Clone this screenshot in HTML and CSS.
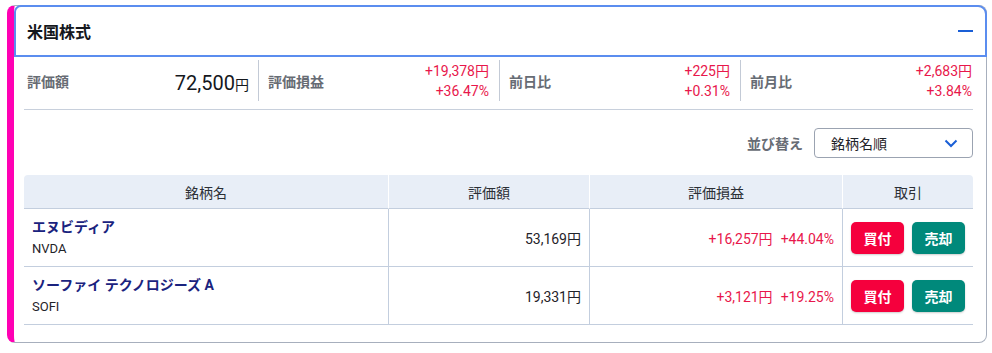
FILE: index.html
```html
<!DOCTYPE html>
<html lang="ja">
<head>
  <meta charset="UTF-8">
  <meta name="viewport" content="width=device-width, initial-scale=1.0">
  <title>米国株式</title>
  <link rel="stylesheet" href="styles.css">
</head>
<body>
  <div class="card">
    <div class="card-header">
      <h2>米国株式</h2>
      <button class="collapse" aria-label="閉じる"><span></span></button>
    </div>

    <div class="card-body">
      <div class="summary">
        <div class="cell">
          <span class="label">評価額</span>
          <span class="total">72,500<small>円</small></span>
        </div>
        <div class="cell">
          <span class="label">評価損益</span>
          <span class="values up">+19,378円<br>+36.47%</span>
        </div>
        <div class="cell">
          <span class="label">前日比</span>
          <span class="values up">+225円<br>+0.31%</span>
        </div>
        <div class="cell">
          <span class="label">前月比</span>
          <span class="values up">+2,683円<br>+3.84%</span>
        </div>
      </div>

      <div class="sort">
        <span class="label">並び替え</span>
        <div class="select">
          <span>銘柄名順</span>
          <svg width="14" height="9" viewBox="0 0 14 9"><path d="M1.5 1.5 L7 7 L12.5 1.5" fill="none" stroke="#1a5fd6" stroke-width="2"/></svg>
        </div>
      </div>

      <table class="holdings">
        <thead>
          <tr>
            <th class="col-name">銘柄名</th>
            <th class="col-value">評価額</th>
            <th class="col-pl">評価損益</th>
            <th class="col-trade">取引</th>
          </tr>
        </thead>
        <tbody>
          <tr>
            <td class="name"><a href="#">エヌビディア</a><span>NVDA</span></td>
            <td class="num">53,169円</td>
            <td class="num up">+16,257円<span class="pct">+44.04%</span></td>
            <td class="trade"><button class="btn buy">買付</button><button class="btn sell">売却</button></td>
          </tr>
          <tr>
            <td class="name"><a href="#">ソーファイ テクノロジーズ A</a><span>SOFI</span></td>
            <td class="num">19,331円</td>
            <td class="num up">+3,121円<span class="pct">+19.25%</span></td>
            <td class="trade"><button class="btn buy">買付</button><button class="btn sell">売却</button></td>
          </tr>
        </tbody>
      </table>
    </div>
  </div>
</body>
</html>
```

FILE: styles.css
```css
body {
  font-family: Roboto, "Noto Sans CJK JP", sans-serif;
  background-color: white;
  color: #1f2329;
  margin: 0;
  font-size: 14px;
}
.card {
  margin: 5px 5px 0 7px;
  height: 338px;
  border: 1px solid #a7afbd;
  border-left: 7px solid #ff00b4;
  border-radius: 8px;
  background-color: white;
  box-sizing: border-box;
}
.card-header {
  display: flex;
  align-items: center;
  justify-content: space-between;
  height: 52px;
  box-sizing: border-box;
  margin: -1px -1px 0 0;
  padding: 0 12px 0 11px;
  border: 2px solid #5b8def;
  border-radius: 7px 9px 0 0;
}
.card-header h2 {
  margin: 0;
  font-size: 16px;
  font-weight: 700;
  color: #15181d;
}
.collapse {
  background: none;
  border: none;
  padding: 0;
  width: 15px;
  height: 16px;
  display: flex;
  align-items: center;
  cursor: pointer;
}
.collapse span {
  display: block;
  width: 15px;
  height: 2px;
  background-color: #1a5fd6;
}
.card-body {
  padding: 0 13px 16px 10px;
}
.label {
  font-size: 14px;
  font-weight: 700;
  color: #676c74;
}
.up {
  color: #e8174b;
}
.summary {
  display: grid;
  grid-template-columns: 235px 241px 241px 1fr;
  padding: 3px 0 8px;
  border-bottom: 1px solid #c8d0dc;
}
.summary .cell {
  display: flex;
  align-items: center;
  justify-content: space-between;
  height: 41px;
  padding: 0 10px 0 9px;
  border-right: 1px solid #c3cad6;
}
.summary .cell:first-child {
  padding-left: 3px;
  padding-right: 9px;
}
.summary .cell:last-child {
  border-right: none;
  padding-right: 1px;
}
.total {
  font-size: 20px;
  color: #15181d;
  padding-top: 4px;
}
.total small {
  font-size: 14px;
}
.values {
  text-align: right;
  line-height: 20px;
  font-size: 14px;
}
.sort {
  display: flex;
  justify-content: flex-end;
  align-items: center;
  gap: 11px;
  margin-top: 18px;
}
.select {
  display: flex;
  align-items: center;
  justify-content: space-between;
  width: 159px;
  height: 30px;
  box-sizing: border-box;
  padding: 0 14px 0 16px;
  border: 1px solid #9ba3b1;
  border-radius: 4px;
  color: #1f2329;
}
.holdings {
  width: 100%;
  margin-top: 17px;
  border-collapse: separate;
  border-spacing: 0;
}
.holdings th {
  height: 33px;
  padding: 0;
  background-color: #e8eef7;
  font-weight: 400;
  color: #2b2f35;
  border-bottom: 1px solid #c3cede;
  border-left: 1px solid white;
}
.holdings th:first-child {
  border-left: none;
  border-top-left-radius: 4px;
}
.holdings th:last-child {
  border-top-right-radius: 4px;
}
.col-name { width: 364px; }
.col-value { width: 200px; }
.col-pl { width: 252px; }
.holdings td {
  height: 58px;
  padding: 0 8px;
  border-bottom: 1px solid #c3cede;
  border-left: 1px solid #c3cede;
  box-sizing: border-box;
}
.holdings td:first-child {
  border-left: none;
}
.holdings .name a,
.holdings .name span {
  display: block;
  line-height: 22px;
}
.holdings .name a {
  color: #1a237e;
  font-weight: 700;
  text-decoration: none;
}
.holdings .name span {
  font-size: 13px;
}
.holdings .num {
  text-align: right;
}
.pct {
  margin-left: 8px;
}
.trade {
  white-space: nowrap;
}
.btn {
  width: 53px;
  height: 32px;
  border: none;
  border-radius: 5px;
  color: white;
  font-family: inherit;
  font-size: 14px;
  font-weight: 700;
  box-shadow: 0 1px 2px rgba(0, 0, 0, 0.2);
  cursor: pointer;
}
.btn + .btn {
  margin-left: 8px;
}
.buy {
  background-color: #f5003d;
}
.sell {
  background-color: #00897b;
}
```
